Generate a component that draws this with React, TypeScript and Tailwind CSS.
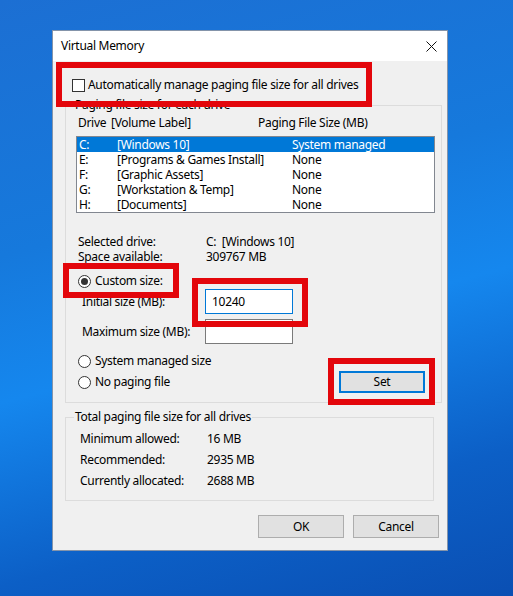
import React from "react";

// Windows 10 "Virtual Memory" dialog on the blue hero wallpaper,
// with the red annotation boxes from the tutorial screenshot.

const drives = [
  { d: "C:", label: "[Windows 10]", size: "System managed", selected: true },
  { d: "E:", label: "[Programs & Games Install]", size: "None" },
  { d: "F:", label: "[Graphic Assets]", size: "None" },
  { d: "G:", label: "[Workstation & Temp]", size: "None" },
  { d: "H:", label: "[Documents]", size: "None" },
];

function Radio({ checked }: { checked?: boolean }) {
  return (
    <span className="flex h-[13px] w-[13px] shrink-0 items-center justify-center rounded-full border border-[#333] bg-white">
      {checked && <span className="h-[7px] w-[7px] rounded-full bg-[#333]" />}
    </span>
  );
}

function RedBox({ className }: { className: string }) {
  return <div className={"pointer-events-none absolute border-[6px] border-[#e3060b] " + className} />;
}

export default function App() {
  return (
    <div
      className="relative h-[596px] w-[513px] overflow-hidden bg-[linear-gradient(165deg,#1c6fd3_0%,#1679dc_35%,#1587ee_55%,#0c5fc6_80%,#0a4fb3_100%)] pl-[52px] pt-[30px] text-[12px] leading-none tracking-[-0.3px] text-black"
      style={{ fontFamily: '"Noto Sans", "Segoe UI", sans-serif' }}
    >
      <div className="w-[396px] border border-[#8494aa] bg-[#f0f0f0]">
        {/* title bar */}
        <div className="flex h-[30px] items-center justify-between bg-white pl-[8px] pr-[9px]">
          <span>Virtual Memory</span>
          <svg width="11" height="11" viewBox="0 0 11 11" className="mr-[1px]">
            <path d="M0.5 0.5 L10.5 10.5 M10.5 0.5 L0.5 10.5" stroke="#111" strokeWidth="1" />
          </svg>
        </div>

        <div className="pb-[12px]">
          {/* auto manage checkbox */}
          <div className="mt-[16px] flex h-[16px] items-center gap-[3px] pl-[19px]">
            <span className="h-[13px] w-[13px] border border-[#333] bg-white" />
            <span>Automatically manage paging file size for all drives</span>
          </div>

          {/* paging file size for each drive */}
          <fieldset className="ml-[12px] mt-[4px] w-[377px] border border-[#dcdcdc] pb-[9px]">
            <legend className="ml-[8px] flex h-[16px] items-center px-[1px]">Paging file size for each drive</legend>

            <div className="mt-[2px] flex h-[16px] items-center pl-[12px]">
              <span className="w-[33px]">Drive</span>
              <span className="w-[147px]">[Volume Label]</span>
              <span>Paging File Size (MB)</span>
            </div>

            <div className="ml-[10px] mt-[5px] h-[77px] w-[359px] border border-[#828790] bg-white">
              {drives.map((r) => (
                <div
                  key={r.d}
                  className={
                    "flex h-[15px] items-center pl-[2px] " + (r.selected ? "bg-[#0078d7] text-white" : "")
                  }
                >
                  <span className="w-[38px]">{r.d}</span>
                  <span className="w-[175px]">{r.label}</span>
                  <span>{r.size}</span>
                </div>
              ))}
            </div>

            <div className="mt-[21px] flex h-[15px] items-center pl-[12px]">
              <span className="w-[128px]">Selected drive:</span>
              <span>C:&nbsp;&nbsp;[Windows 10]</span>
            </div>
            <div className="flex h-[15px] items-center pl-[12px]">
              <span className="w-[128px]">Space available:</span>
              <span>309767 MB</span>
            </div>

            <div className="mt-[9px] flex h-[16px] items-center gap-[4px] pl-[12px]">
              <Radio checked />
              <span>Custom size:</span>
            </div>
            <div className="flex h-[25px] items-center pl-[16px]">
              <span className="w-[123px]">Initial size (MB):</span>
              <div className="flex h-[25px] w-[88px] items-center border border-[#0078d7] bg-white pl-[6px]">10240</div>
            </div>
            <div className="mt-[5px] flex h-[25px] items-center pl-[16px]">
              <span className="w-[123px]">Maximum size (MB):</span>
              <div className="h-[25px] w-[88px] border border-[#7a7a7a] bg-white" />
            </div>

            <div className="mt-[9px] flex h-[16px] items-center gap-[4px] pl-[12px]">
              <Radio />
              <span>System managed size</span>
            </div>
            <div className="mt-[2px] flex h-[22px] items-center justify-between pl-[12px] pr-[16px]">
              <div className="flex items-center gap-[4px]">
                <Radio />
                <span>No paging file</span>
              </div>
              <button className="flex h-[22px] w-[86px] items-center justify-center border-2 border-[#0078d7] bg-[#e1e1e1]">
                Set
              </button>
            </div>
          </fieldset>

          {/* totals */}
          <fieldset className="ml-[12px] mt-[6px] w-[369px] border border-[#dcdcdc] pb-[11px]">
            <legend className="ml-[8px] flex h-[16px] items-center px-[1px]">Total paging file size for all drives</legend>
            {[
              ["Minimum allowed:", "16 MB"],
              ["Recommended:", "2935 MB"],
              ["Currently allocated:", "2688 MB"],
            ].map(([k, v], i) => (
              <div key={k} className={"flex h-[16px] items-center pl-[14px] " + (i === 0 ? "mt-[6px]" : "mt-[5px]")}>
                <span className="w-[127px]">{k}</span>
                <span>{v}</span>
              </div>
            ))}
          </fieldset>

          {/* buttons */}
          <div className="mt-[14px] flex justify-end gap-[9px] pr-[8px]">
            <button className="flex h-[23px] w-[86px] items-center justify-center border border-[#adadad] bg-[#e1e1e1]">
              OK
            </button>
            <button className="flex h-[23px] w-[86px] items-center justify-center border border-[#adadad] bg-[#e1e1e1]">
              Cancel
            </button>
          </div>
        </div>
      </div>

      {/* annotation boxes */}
      <RedBox className="left-[56px] top-[62px] h-[45px] w-[316px]" />
      <RedBox className="left-[63px] top-[263px] h-[35px] w-[116px]" />
      <RedBox className="left-[192px] top-[278px] h-[49px] w-[116px]" />
      <RedBox className="left-[328px] top-[358px] h-[47px] w-[107px]" />
    </div>
  );
}
